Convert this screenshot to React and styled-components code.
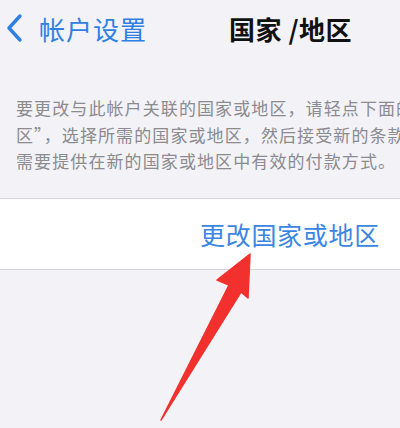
import React from "react"
import styled, { createGlobalStyle } from "styled-components"

const Global = createGlobalStyle`
  html, body {
    margin: 0;
    padding: 0;
    background: #f2f2f7;
  }
  body {
    font-family: "Noto Sans CJK SC", "Noto Sans", sans-serif;
  }
`

const Screen = styled.div`
  position: relative;
  width: 400px;
  height: 428px;
  overflow: hidden;
  background: #f2f2f7;
`

const NavBar = styled.div`
  display: flex;
  align-items: center;
  height: 56px;
  padding-left: 5px;
  box-sizing: border-box;
`

const BackButton = styled.div`
  display: flex;
  align-items: center;
  gap: 14px;
  color: #2f80e4;
  font-size: 26px;
  letter-spacing: 1px;
`

const Title = styled.div`
  margin-left: 82px;
  font-size: 26px;
  font-weight: 700;
  color: #111;
  letter-spacing: 0.5px;
`

const Description = styled.div`
  padding: 39px 0 23px 16px;
  color: #8b8b90;
  font-size: 17px;
  letter-spacing: 1.1px;
  line-height: 26.5px;
`

const Line = styled.div`
  white-space: nowrap;
`

const Cell = styled.div`
  display: flex;
  align-items: center;
  height: 70px;
  padding-left: 200px;
  background: #fff;
  border-top: 1px solid #d6d6da;
  border-bottom: 1px solid #d6d6da;
`

const CellText = styled.span`
  color: #3a86e2;
  font-size: 25px;
  letter-spacing: 0.7px;
`

const Arrow = styled.svg`
  position: absolute;
  left: 0;
  top: 0;
  pointer-events: none;
`

export default function App() {
  return (
    <>
      <Global />
      <Screen>
        <NavBar>
          <BackButton>
            <svg width="20" height="30" viewBox="0 0 20 30">
              <path
                d="M15 3 L4 15 L15 27"
                fill="none"
                stroke="#2f80e4"
                strokeWidth="3.4"
                strokeLinecap="round"
                strokeLinejoin="round"
              />
            </svg>
            <span>帐户设置</span>
          </BackButton>
          <Title>国家 /地区</Title>
        </NavBar>
        <Description>
          <Line>要更改与此帐户关联的国家或地区，请轻点下面的“更改国家或地</Line>
          <Line>区”，选择所需的国家或地区，然后接受新的条款与条件。您可能</Line>
          <Line>需要提供在新的国家或地区中有效的付款方式。</Line>
        </Description>
        <Cell>
          <CellText>更改国家或地区</CellText>
        </Cell>
        <Arrow width="400" height="428" viewBox="0 0 400 428">
          <polygon
            points="250,254 217,280 229,285 161,420 241,292 248,298"
            fill="#f2312e"
            stroke="#f2312e"
            strokeWidth="1.5"
            strokeLinejoin="round"
          />
        </Arrow>
      </Screen>
    </>
  )
}
